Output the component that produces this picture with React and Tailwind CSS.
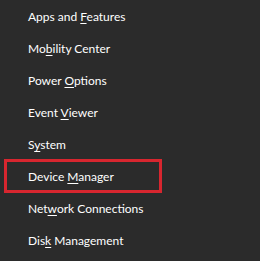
import React from 'react';

const items = [
  { pre: 'Apps and ', key: 'F', post: 'eatures' },
  { pre: 'Mo', key: 'b', post: 'ility Center' },
  { pre: 'Power ', key: 'O', post: 'ptions' },
  { pre: 'Event ', key: 'V', post: 'iewer' },
  { pre: 'S', key: 'y', post: 'stem' },
  { pre: 'Device ', key: 'M', post: 'anager', boxed: true },
  { pre: 'Net', key: 'w', post: 'ork Connections' },
  { pre: 'Dis', key: 'k', post: ' Management' },
];

export default function App() {
  return (
    <div
      className="w-[260px] h-[261px] pt-[1px] bg-[#2b2b2b] text-white text-[12px] overflow-hidden"
      style={{ fontFamily: '"Segoe UI", Lato, sans-serif' }}
    >
      {items.map((item, idx) => (
        <div key={idx} className="relative h-[32px] flex items-center pl-[28px] leading-none">
          <span>
            {item.pre}
            <span className="underline underline-offset-2">{item.key}</span>
            {item.post}
          </span>
          {item.boxed && (
            <span className="absolute left-[4px] -top-[2px] w-[158px] h-[34px] border-[3px] border-[#d7262f]" />
          )}
        </div>
      ))}
    </div>
  );
}
